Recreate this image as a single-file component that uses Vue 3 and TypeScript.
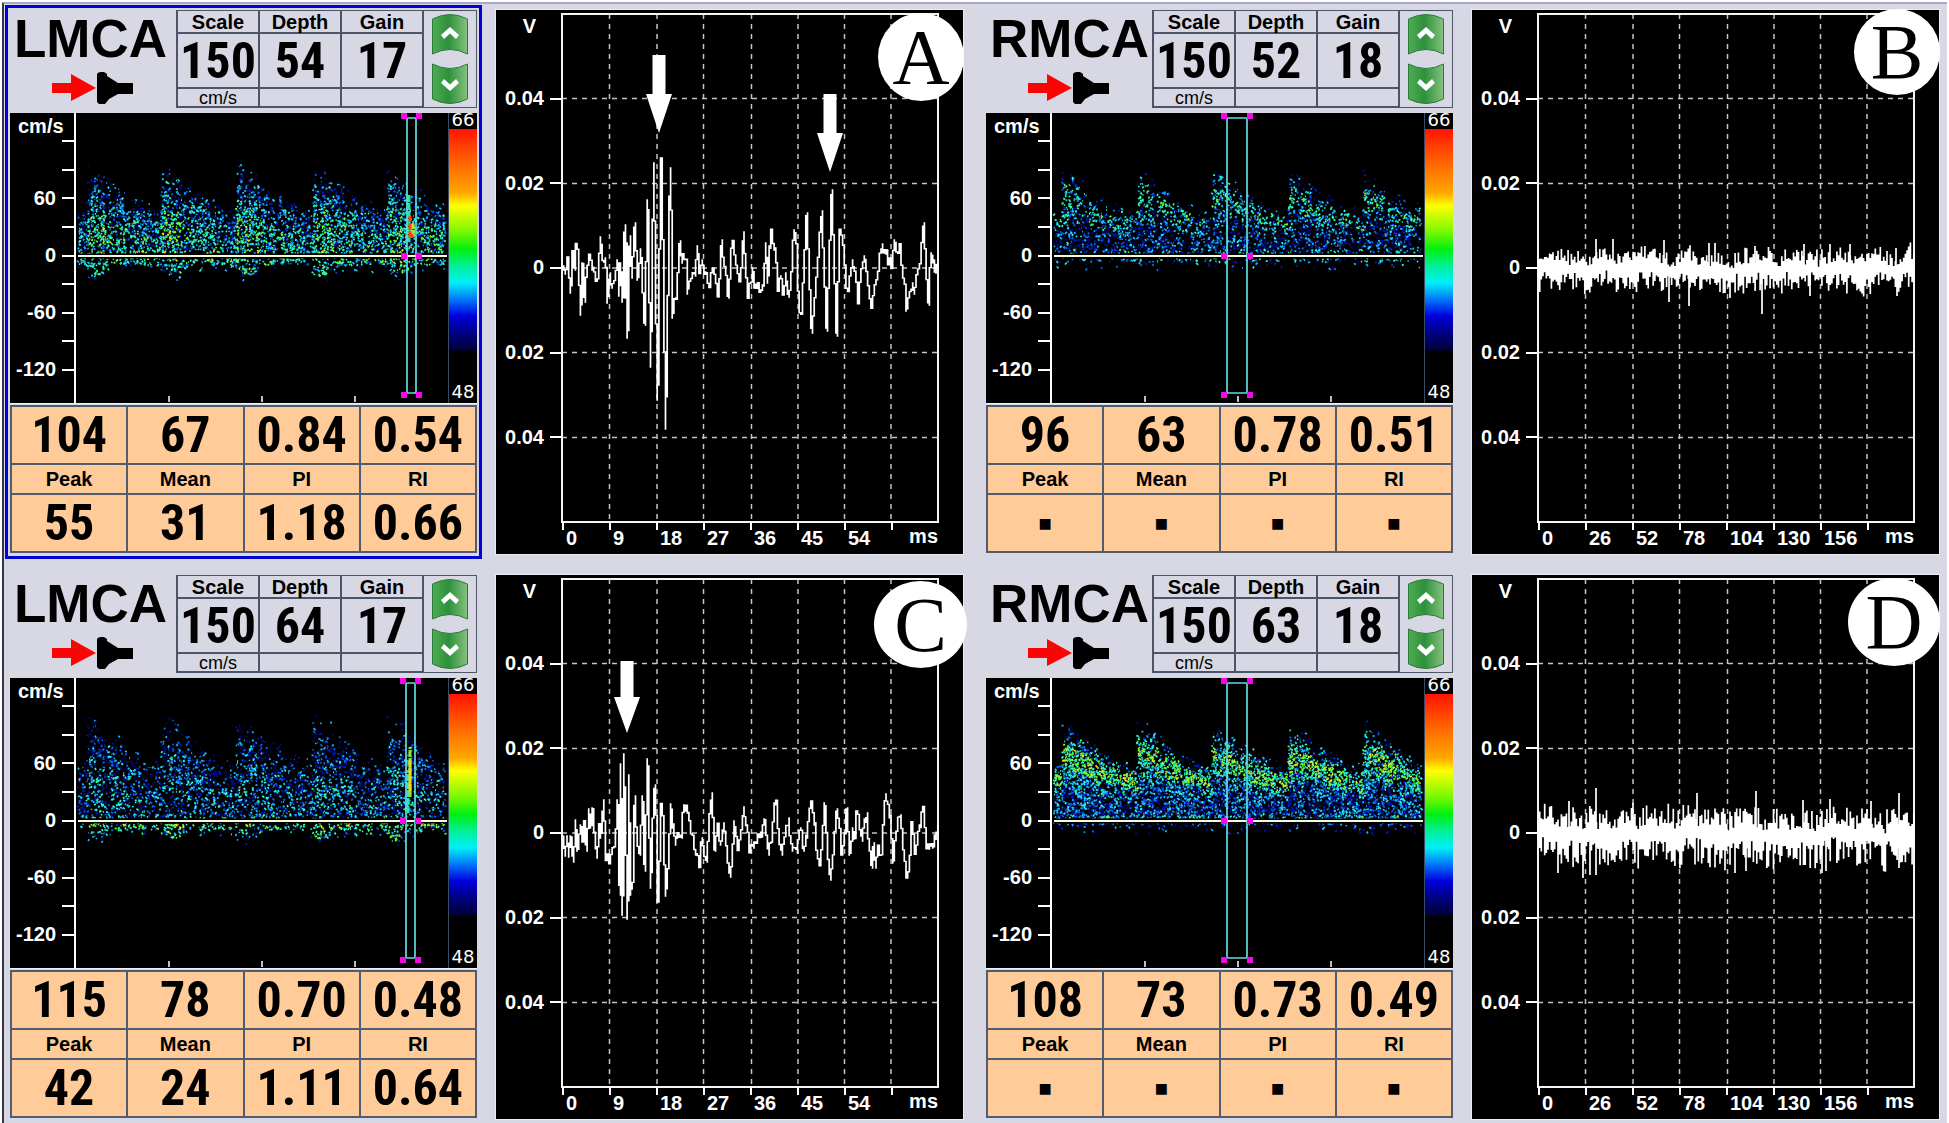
<script setup lang="ts">
interface Profile {
  seed: number
  peak: number
  rest: number
  belowPeak: number
  belowRest: number
  density: number
  band: number
  core: number
  belowGlow: number
}
interface Streak { x: number; from: number; to: number; color: string }
interface Gate { left: number; right: number }
interface Arrow { x: number; y: number; h: number }
interface Monitor {
  id: string
  vessel: string
  selected: boolean
  params: string[]
  top: string[]
  bottom: string[]
  gate: Gate
  specks: { color: string; d: string }[]
  streaks: Streak[]
  times: string[]
  trace: string
  arrows: Arrow[]
  badge: { w: number; h: number; top: number; right: number }
}

function random(seed: number): () => number {
  let s = seed
  return () => {
    s = (s + 0x6d2b79f5) | 0
    let t = Math.imul(s ^ (s >>> 15), 1 | s)
    t = (t + Math.imul(t ^ (t >>> 7), 61 | t)) ^ t
    return ((t ^ (t >>> 14)) >>> 0) / 4294967296
  }
}

const palette = ['#000a6c', '#0018b8', '#0c60e8', '#18b8f8', '#28f4e8', '#30f890', '#78fc28', '#e8e820']

// Speckled Doppler flow: five beats, each a sharp rise and a slow decay.
function flow(p: Profile): { color: string; d: string }[] {
  const r = random(p.seed)
  const out = palette.map(() => '')
  const step = 1.7
  const zero = 143
  const clumps = Array.from({ length: 62 * 30 }, () => r())
  for (let x = 3; x < 370; x += step) {
    const phase = (((x - 11 + 75) % 75) + 75) % 75 / 75
    const shape = phase < 0.22 ? 1 - phase * 0.6 : 0.86 * Math.exp(-(phase - 0.22) * 1.7)
    const env = p.rest + (p.peak - p.rest) * Math.max(0, (shape - 0.18) / 0.82)
    const depth = p.belowRest + (p.belowPeak - p.belowRest) * Math.exp(-Math.pow((phase - 0.14) / 0.14, 2))
    for (let v = -depth - 6; v < env * 1.15; v += step) {
      if (Math.abs(v) < 2.5) continue
      const clump = clumps[Math.floor(x / 6) * 30 + Math.floor((v + 36) / 6)] ?? 0.5
      let glow = 0
      let lit = 0
      if (v > 0) {
        const rel = v / env
        const band = Math.exp(-Math.pow((rel - 0.76) / 0.24, 2))
        const core = Math.exp(-Math.pow((rel - 0.3) / 0.38, 2)) * (1.15 - phase * 0.5)
        glow = p.band * band + p.core * core + (v < 5 ? 0.3 : 0)
        lit = p.density * (rel > 0.85 ? Math.max(0, (1.15 - rel) * 2.2) : 1)
      } else {
        const rel = -v / depth
        glow = p.belowGlow * (1.1 - rel * 0.5)
        lit = rel > 1 ? 0.06 : p.density * (0.5 + p.belowGlow * 0.5)
      }
      if (r() > lit * (0.6 + clump * 0.8)) continue
      const shade = glow * 0.9 + (clump - 0.5) * 0.22 + (r() - 0.5) * 0.75
      const level = Math.floor(Math.max(0, Math.min(7, shade * 6.4 + 1.1)))
      const dx = Math.round((r() - 0.5) * 5)
      const dy = Math.round((r() - 0.5) * 5)
      out[level] += `M${x.toFixed(1)} ${(zero - v).toFixed(1)}l${dx || 1} ${dy}`
    }
  }
  return out.map((d, i) => ({ color: palette[i], d }))
}

const mid = 254

// Joins the listed peaks, sampled once per column of the plot.
function burst(points: number[], seed: number): string {
  const r = random(seed)
  const step = 1.67
  let d = ''
  let x0 = 0
  let v0 = 0
  let i = 0
  let prev = 0
  for (let x = 0; x <= 376; x += step) {
    let low = prev
    let high = prev
    while (i < points.length && points[i] <= x) {
      x0 = points[i]
      v0 = points[i + 1]
      low = Math.min(low, v0)
      high = Math.max(high, v0)
      i += 2
    }
    const x1 = i < points.length ? points[i] : 377
    const v1 = i < points.length ? points[i + 1] : 0
    const calm = Math.abs(v1 - v0) < 35 ? 11 : 2
    const v = v0 + (v1 - v0) * ((x - x0) / (x1 - x0 || 1)) + (r() - 0.5) * calm
    low = Math.min(low, v)
    high = Math.max(high, v)
    d += `M${x.toFixed(1)} ${(mid - high - 0.7).toFixed(1)}V${(mid - low + 0.7).toFixed(1)}`
    prev = v
  }
  return d
}

function noise(seed: number, up: number, down: number, spikes: number[]): string {
  const r = random(seed)
  let d = ''
  let drift = 0
  for (let x = 0; x < 376; x += 1.67) {
    drift = drift * 0.8 + (r() - 0.5) * 6
    const hi = up * (0.22 + 0.85 * Math.pow(r(), 1.3)) + drift
    const lo = down * (0.22 + 0.8 * Math.pow(r(), 1.3)) - drift
    d += `M${x.toFixed(1)} ${(mid - hi).toFixed(1)}V${(mid + 1 + lo).toFixed(1)}`
  }
  for (let i = 0; i < spikes.length; i += 2) {
    d += `M${spikes[i]} ${mid}V${mid - spikes[i + 1]}`
  }
  return d
}

const traceA = burst([
  2, -6, 5, 11, 8, -25, 10, 15, 12, -2, 13, 20, 15, 20, 18, -47, 20, 5, 22, -34, 24, 2, 28, 13, 30, -2, 34, -12, 36, 0,
  38, 31, 40, 10, 43, 10, 45, -35, 47, -5, 50, -20, 53, -4, 55, 8, 56, -28, 58, 5, 60, -34, 62, 43, 63, -30, 64, 25,
  65, -70, 67, 32, 69, -10, 72, 45, 75, -12, 78, 19, 79, -5, 82, -57, 85, 68, 88, -99, 91, 105, 93, -30, 95, -132,
  98, 110, 99, 110, 103, -161, 107, 80, 108, 100, 110, -50, 112, -30, 114, -28, 117, 27, 119, 5, 121, 12, 124, 8,
  125, -26, 128, -12, 132, -8, 135, 22, 137, -4, 140, 8, 142, -4, 147, -15, 149, 0, 152, -8, 154, -16, 156, -29,
  159, 28, 161, 5, 164, -12, 166, -30, 169, 25, 171, 27, 173, 8, 176, -8, 178, -10, 181, 36, 183, -5, 185, -27,
  188, -15, 190, 0, 192, -20, 195, -15, 198, -22, 201, -18, 203, 25, 205, -15, 207, 22, 209, 35, 211, 18, 213, 20,
  215, -20, 218, -8, 221, -25, 223, -5, 226, -29, 228, -20, 231, 38, 234, 20, 236, -38, 239, -43, 244, 55, 249, -65,
  253, -20, 257, 28, 259, 57, 264, -63, 269, 78, 274, -68, 277, 38, 281, 20, 284, -22, 286, -23, 288, 0, 290, 8,
  293, -5, 296, -35, 298, -4, 302, 12, 305, -12, 309, -40, 311, -25, 315, -5, 319, 24, 321, 15, 324, 18, 326, 5,
  329, 4, 332, 28, 335, 16, 337, 22, 339, 4, 342, -12, 344, -43, 347, -25, 350, -15, 352, -26, 355, -5, 358, 12,
  361, 45, 365, -28, 366, -37, 368, 15, 371, 8, 373, -5, 376, 5,
], 5)

const traceC = burst([
  2, -23, 4, -3, 6, -24, 8, -3, 11, -29, 13, 13, 15, -18, 18, 8, 20, -7, 22, 10, 24, -18, 26, 24, 28, 5, 30, 25,
  32, -8, 34, -25, 37, 8, 38, -5, 41, 33, 43, -22, 47, -28, 50, -15, 53, -5, 55, 33, 57, -62, 58, 69, 60, -82, 61, 79,
  65, -86, 66, 58, 68, -62, 70, -56, 72, 37, 74, -5, 77, -22, 80, 37, 82, -38, 85, 74, 88, -55, 91, 40, 93, 48,
  95, -69, 96, -69, 98, 25, 100, 22, 103, -63, 106, -25, 108, 29, 110, 5, 113, -12, 116, 0, 119, -5, 121, 28, 125, 20,
  128, 3, 131, -8, 133, -22, 137, -30, 139, -5, 141, -18, 144, -29, 147, 20, 149, 40, 152, -18, 155, 8, 157, -12,
  161, 10, 164, -18, 168, -44, 172, 12, 175, -15, 178, 2, 181, 26, 184, 8, 187, -16, 191, -15, 195, -6, 199, -4,
  202, 14, 206, -22, 209, -3, 212, 30, 214, 28, 216, -4, 219, -22, 222, -5, 226, 15, 229, -18, 234, -20, 238, 5,
  241, -18, 244, -5, 246, 22, 249, 32, 252, 8, 255, -25, 258, -30, 262, 30, 265, -18, 268, -47, 271, -15, 274, 24,
  277, 5, 279, -18, 282, 0, 284, 25, 287, -22, 290, 5, 292, -6, 294, 20, 296, 12, 299, -8, 302, 14, 304, 20, 306, -8,
  309, -35, 311, -10, 313, -35, 315, -15, 319, -20, 321, 8, 323, 39, 326, 24, 328, 18, 330, -30, 332, -12, 335, 12,
  338, 18, 341, -22, 344, -43, 347, -30, 349, 8, 352, -18, 355, -4, 357, 8, 361, 25, 363, -8, 366, -16, 370, -15,
  372, -2, 376, 6,
], 9)

const traceB = noise(21, 19, 24, [
  58, 29, 75, 29, 126, 28, 171, 25, 177, 25, 217, 22, 266, 24, 292, 24, 312, 24, 358, 20,
  131, -34, 151, -38, 224, -46, 272, -28, 359, -28,
])
const traceD = noise(44, 26, 32, [
  58, 45, 159, 40, 218, 42, 292, 34, 361, 40, 265, 33, 31, 32, 95, 30, 333, 32,
  45, -45, 20, -40, 58, -42, 52, -42, 197, -40, 208, -38, 284, -40, 288, -38, 361, -35,
])

const shortTimes = ['0', '9', '18', '27', '36', '45', '54']
const longTimes = ['0', '26', '52', '78', '104', '130', '156']

const monitors: Monitor[] = [
  {
    id: 'A', vessel: 'LMCA', selected: true, params: ['150', '54', '17'],
    top: ['104', '67', '0.84', '0.54'], bottom: ['55', '31', '1.18', '0.66'],
    gate: { left: 331, right: 340 },
    specks: flow({ seed: 1, peak: 82, rest: 40, belowPeak: 20, belowRest: 9, density: 0.48, band: 0.12, core: 0.6, belowGlow: 0.7 }),
    streaks: [
      { x: 333, from: 14, to: 62, color: '#20e8a0' },
      { x: 334, from: 18, to: 40, color: '#ff4010' },
      { x: 337, from: 19, to: 32, color: '#d0e020' },
      { x: 336, from: 18, to: 22, color: '#ff4010' },
    ],
    times: shortTimes, trace: traceA,
    arrows: [{ x: 97, y: 41, h: 78 }, { x: 268, y: 80, h: 78 }],
    badge: { w: 86, h: 88, top: 3, right: -1 },
  },
  {
    id: 'B', vessel: 'RMCA', selected: false, params: ['150', '52', '18'],
    top: ['96', '63', '0.78', '0.51'], bottom: ['■', '■', '■', '■'],
    gate: { left: 175, right: 195 },
    specks: flow({ seed: 2, peak: 78, rest: 38, belowPeak: 8, belowRest: 6, density: 0.4, band: 0.5, core: 0.08, belowGlow: 0.42 }),
    streaks: [],
    times: longTimes, trace: traceB, arrows: [],
    badge: { w: 86, h: 86, top: -1, right: -1 },
  },
  {
    id: 'C', vessel: 'LMCA', selected: false, params: ['150', '64', '17'],
    top: ['115', '78', '0.70', '0.48'], bottom: ['42', '24', '1.11', '0.64'],
    gate: { left: 330, right: 339 },
    specks: flow({ seed: 3, peak: 96, rest: 50, belowPeak: 18, belowRest: 9, density: 0.38, band: 0.06, core: 0.3, belowGlow: 0.82 }),
    streaks: [
      { x: 332, from: 8, to: 50, color: '#20e8c0' },
      { x: 334, from: 24, to: 74, color: '#90e830' },
      { x: 334, from: 30, to: 62, color: '#e8d820' },
    ],
    times: shortTimes, trace: traceC,
    arrows: [{ x: 65, y: 82, h: 72 }],
    badge: { w: 93, h: 87, top: 6, right: -4 },
  },
  {
    id: 'D', vessel: 'RMCA', selected: false, params: ['150', '63', '18'],
    top: ['108', '73', '0.73', '0.49'], bottom: ['■', '■', '■', '■'],
    gate: { left: 175, right: 195 },
    specks: flow({ seed: 4, peak: 88, rest: 48, belowPeak: 7, belowRest: 5, density: 0.66, band: 0.72, core: 0.12, belowGlow: 0.05 }),
    streaks: [],
    times: longTimes, trace: traceD, arrows: [],
    badge: { w: 92, h: 88, top: 3, right: -1 },
  },
]

const velocities = ['', '', '60', '', '0', '', '-60', '', '-120']
const volts = ['0.04', '0.02', '0', '0.02', '0.04']
const measures = ['Peak', 'Mean', 'PI', 'RI']
const paramNames = ['Scale', 'Depth', 'Gain']

function arrowPoints(a: Arrow): string {
  const m = a.y + a.h / 2
  return `${a.x - 6.5},${a.y} ${a.x + 6.5},${a.y} ${a.x + 6.5},${m} ${a.x + 13},${m} ${a.x},${a.y + a.h} ${a.x - 13},${m} ${a.x - 6.5},${m}`
}
</script>

<template>
  <main class="page">
    <section v-for="m in monitors" :key="m.id" class="monitor">
      <article class="doppler" :class="{ selected: m.selected }">
        <header class="head">
          <div class="vessel">
            <h2>{{ m.vessel }}</h2>
            <svg class="probe" width="82" height="32" viewBox="0 0 82 32" aria-hidden="true">
              <path d="M0 11H19V2L44 16L19 29V21H0Z" fill="#fb0404" />
              <path d="M45 2Q46 0 49 0H52L55 2V4L66 11H81V22H66L57 27L53 32H47L45 30Z" fill="#000" />
            </svg>
          </div>
          <table class="params">
            <thead>
              <tr><th v-for="n in paramNames" :key="n" scope="col">{{ n }}</th></tr>
            </thead>
            <tbody>
              <tr class="values"><td v-for="(p, i) in m.params" :key="i">{{ p }}</td></tr>
              <tr class="units"><td>cm/s</td><td></td><td></td></tr>
            </tbody>
          </table>
          <div class="steps">
            <button type="button" aria-label="Increase">
              <svg width="36" height="41" viewBox="0 0 36 41">
                <defs>
                  <linearGradient :id="'green' + m.id" x1="0" x2="1" y1="0" y2="0">
                    <stop offset="0" stop-color="#4fae52" />
                    <stop offset=".45" stop-color="#2f8f3c" />
                    <stop offset=".55" stop-color="#3c9a46" />
                    <stop offset="1" stop-color="#86c080" />
                  </linearGradient>
                </defs>
                <path d="M.5 5Q18 -4 35.500 5V40Q18 31 .5 40Z" :fill="`url(#green${m.id})`" stroke="#2a7a3c" />
                <path d="M9 21L18 13L27 21L24 25L18 19.500L12 25Z" fill="#fff" />
              </svg>
            </button>
            <button type="button" aria-label="Decrease">
              <svg width="36" height="41" viewBox="0 0 36 41">
                <path d="M.5 1Q18 10 35.500 1V36Q18 45 .5 36Z" :fill="`url(#green${m.id})`" stroke="#2a7a3c" />
                <path d="M9 20L18 28L27 20L24 16L18 21.500L12 16Z" fill="#fff" />
              </svg>
            </button>
          </div>
        </header>

        <div class="spectrum">
          <div class="velocity">
            <div class="unit">cm/s</div>
            <div v-for="(v, i) in velocities" :key="i" class="mark"><span>{{ v }}</span><i></i></div>
          </div>
          <svg class="flow" viewBox="0 0 373 290" preserveAspectRatio="none" aria-hidden="true">
            <path v-for="s in m.specks" :key="s.color" :d="s.d" :stroke="s.color" stroke-width="1.700" fill="none" />
            <path
              v-for="(s, i) in m.streaks" :key="i" :d="`M${s.x} ${143 - s.from}V${143 - s.to}`"
              :stroke="s.color" stroke-width="3" stroke-dasharray="7 1"
            />
            <path d="M93 283V289M186 283V289M279 283V289" stroke="#fff" stroke-width="1.500" />
            <path d="M2 143H371" stroke="#000" stroke-width="5" />
            <path d="M2 143H371" stroke="#f8f8dc" stroke-width="2" />
            <path d="M372.500 0V290" stroke="#3c4c60" />
            <rect :x="m.gate.left" y="5" :width="m.gate.right - m.gate.left" height="275" rx="1" fill="none" stroke="#62dce2" stroke-width="1.700" />
            <template v-for="y in [0, 140, 279]" :key="y">
              <rect :x="m.gate.left - 6" :y="y" width="6" height="6" fill="#f806e8" />
              <rect :x="m.gate.right" :y="y" width="6" height="6" fill="#f806e8" />
            </template>
          </svg>
          <div class="legend">
            <span>66</span>
            <div class="ramp"></div>
            <span>48</span>
          </div>
        </div>

        <table class="results">
          <tbody>
            <tr class="big"><td v-for="(v, i) in m.top" :key="i">{{ v }}</td></tr>
            <tr class="names"><th v-for="n in measures" :key="n" scope="col">{{ n }}</th></tr>
            <tr class="big"><td v-for="(v, i) in m.bottom" :key="i" :class="{ empty: v === '■' }">{{ v }}</td></tr>
          </tbody>
        </table>
      </article>

      <article class="wave">
        <div class="volts">
          <div class="volt-unit">V</div>
          <div v-for="(v, i) in volts" :key="i" class="mark"><span>{{ v }}</span><i></i></div>
        </div>
        <svg class="plot" viewBox="0 0 376 508" preserveAspectRatio="none" aria-hidden="true">
          <path
            d="M47.500 0V508M95 0V508M141.500 0V508M189.500 0V508M236 0V508M282.500 0V508M329 0V508"
            class="dash"
          />
          <path d="M0 84.500H376M0 169.500H376M0 254H376M0 338.500H376M0 423.500H376" class="dash" />
          <path d="M0 0H376V508H0Z" fill="none" stroke="#f4f4f4" stroke-width="2" />
          <path :d="m.trace" fill="none" stroke="#fff" stroke-width="1.700" />
          <polygon v-for="(a, i) in m.arrows" :key="i" :points="arrowPoints(a)" fill="#fff" />
        </svg>
        <div class="times">
          <span v-for="t in m.times" :key="t">{{ t }}</span>
          <span class="ms">ms</span>
        </div>
        <div
          class="badge"
          :style="{ width: m.badge.w + 'px', height: m.badge.h + 'px', top: m.badge.top + 'px', right: m.badge.right + 'px' }"
        >{{ m.id }}</div>
      </article>
    </section>
  </main>
</template>

<style>
body {
  background: #fff;
}
</style>

<style scoped>
.page {
  box-sizing: border-box;
  min-height: calc(100vh - 2px);
  margin: 2px 2px 0;
  padding: 6px 8px 2px 6px;
  border-top: 2px solid #a8a7ca;
  border-left: 2px solid #34344c;
  background: #d8d8e4;
  display: grid;
  grid-template-columns: 1fr 1fr;
  align-content: start;
  gap: 21px 23px;
  font-family: "Liberation Sans", Arial, sans-serif;
  font-size: 20px;
  font-weight: bold;
  color: #000;
}
.monitor {
  display: grid;
  grid-template-columns: 1fr 1fr;
  gap: 19px;
  min-width: 0;
}
.doppler {
  display: flex;
  flex-direction: column;
  min-width: 0;
}
.selected {
  outline: 3px solid #0404d0;
  outline-offset: 2px;
}
.head {
  display: grid;
  grid-template-columns: 166px 1fr 53px;
  height: 98px;
  margin-bottom: 5px;
}
.vessel {
  padding: 2px 0 0 4px;
}
.vessel h2 {
  margin: 0;
  font-size: 53px;
  line-height: 54px;
}
.probe {
  display: block;
  margin: 6px 0 0 38px;
}
table {
  border-collapse: collapse;
  table-layout: fixed;
  width: 100%;
}
th, td {
  padding: 0;
  text-align: center;
}
.params {
  height: 98px;
}
.params th, .params td {
  border: 2px solid #4c5468;
  border-top-width: 1px;
}
.params th {
  height: 21px;
  line-height: 20px;
}
.values td {
  height: 53px;
  font-family: "Liberation Sans Narrow", "Arial Narrow", "Roboto Condensed", "Liberation Sans", sans-serif;
  font-size: 50px;
  line-height: 52px;
}
.units td {
  height: 17px;
  font-size: 18px;
  line-height: 16px;
  font-weight: normal;
}
.steps {
  border: 1px solid #4c5468;
  border-left: 0;
  display: flex;
  flex-direction: column;
  align-items: center;
  justify-content: space-between;
  padding: 3px 0;
}
.steps button {
  padding: 0;
  border: 0;
  background: none;
  line-height: 0;
}
.spectrum {
  display: grid;
  grid-template-columns: 66px 1fr 28px;
  height: 290px;
  background: #000;
  color: #fff;
  border-bottom: 1px solid #f0f0f8;
  margin-bottom: 1px;
}
.velocity {
  display: flex;
  flex-direction: column;
  border-right: 2px solid #fff;
  padding-bottom: 19px;
}
.unit {
  height: 14px;
  line-height: 26px;
  padding-left: 8px;
}
.mark {
  flex: 1;
  display: flex;
  align-items: center;
  justify-content: flex-end;
  gap: 6px;
}
.mark i {
  width: 12px;
  height: 2px;
  background: #fff;
}
.flow {
  display: block;
  width: 100%;
  height: 290px;
}
.legend {
  display: flex;
  flex-direction: column;
  padding-bottom: 4px;
  font: 18px/14px "DejaVu Sans", sans-serif;
  text-align: center;
}
.ramp {
  flex: 1;
  margin-top: 2px;
  background: linear-gradient(#ff1400, #ff6a00 14%, #ffa800 25%, #ffff00 30%, #7cf800 40%, #00f010 47%, #00f0a0 54%, #00f0f8 60%, #0070f8 67%, #0000e0 73%, #000070 81%, #000040 86%, #000 87%);
}
.results td, .results th {
  border: 2px solid #505c70;
  background: #ffcb98;
}
.results {
  border: 1px solid #505c70;
}
.big td {
  height: 56px;
  font-family: "Liberation Sans Narrow", "Arial Narrow", "Roboto Condensed", "Liberation Sans", sans-serif;
  font-size: 50px;
  line-height: 56px;
}
.big .empty {
  font-family: "DejaVu Sans", sans-serif;
  font-size: 14px;
}
.names th {
  height: 28px;
  line-height: 28px;
}
.wave {
  position: relative;
  display: grid;
  grid-template: 4px 1fr 32px / 66px 1fr 25px;
  background: #000;
  color: #fff;
  box-shadow: 0 0 0 1px #ececf4;
}
.volts {
  grid-area: 2 / 1;
  display: grid;
  grid-template-rows: 1fr repeat(5, 2fr) 1fr;
}
.volt-unit {
  text-align: right;
  padding-right: 26px;
  line-height: 24px;
}
.plot {
  grid-area: 2 / 2;
  display: block;
  width: 100%;
  height: 508px;
  overflow: visible;
}
.dash {
  fill: none;
  stroke: #c4c4c4;
  stroke-width: 1.5px;
  stroke-dasharray: 5 5;
}
.times {
  grid-area: 3 / 2;
  display: grid;
  grid-template-columns: repeat(8, 1fr);
}
.times span {
  height: 8px;
  padding-left: 2px;
  border-left: 2px solid #fff;
  line-height: 32px;
  white-space: nowrap;
}
.times .ms {
  text-align: right;
  line-height: 28px;
}
.badge {
  position: absolute;
  display: flex;
  align-items: center;
  justify-content: center;
  border-radius: 50%;
  background: #fff;
  color: #000;
  font: 79px/80px "Liberation Serif", serif;
}
</style>
